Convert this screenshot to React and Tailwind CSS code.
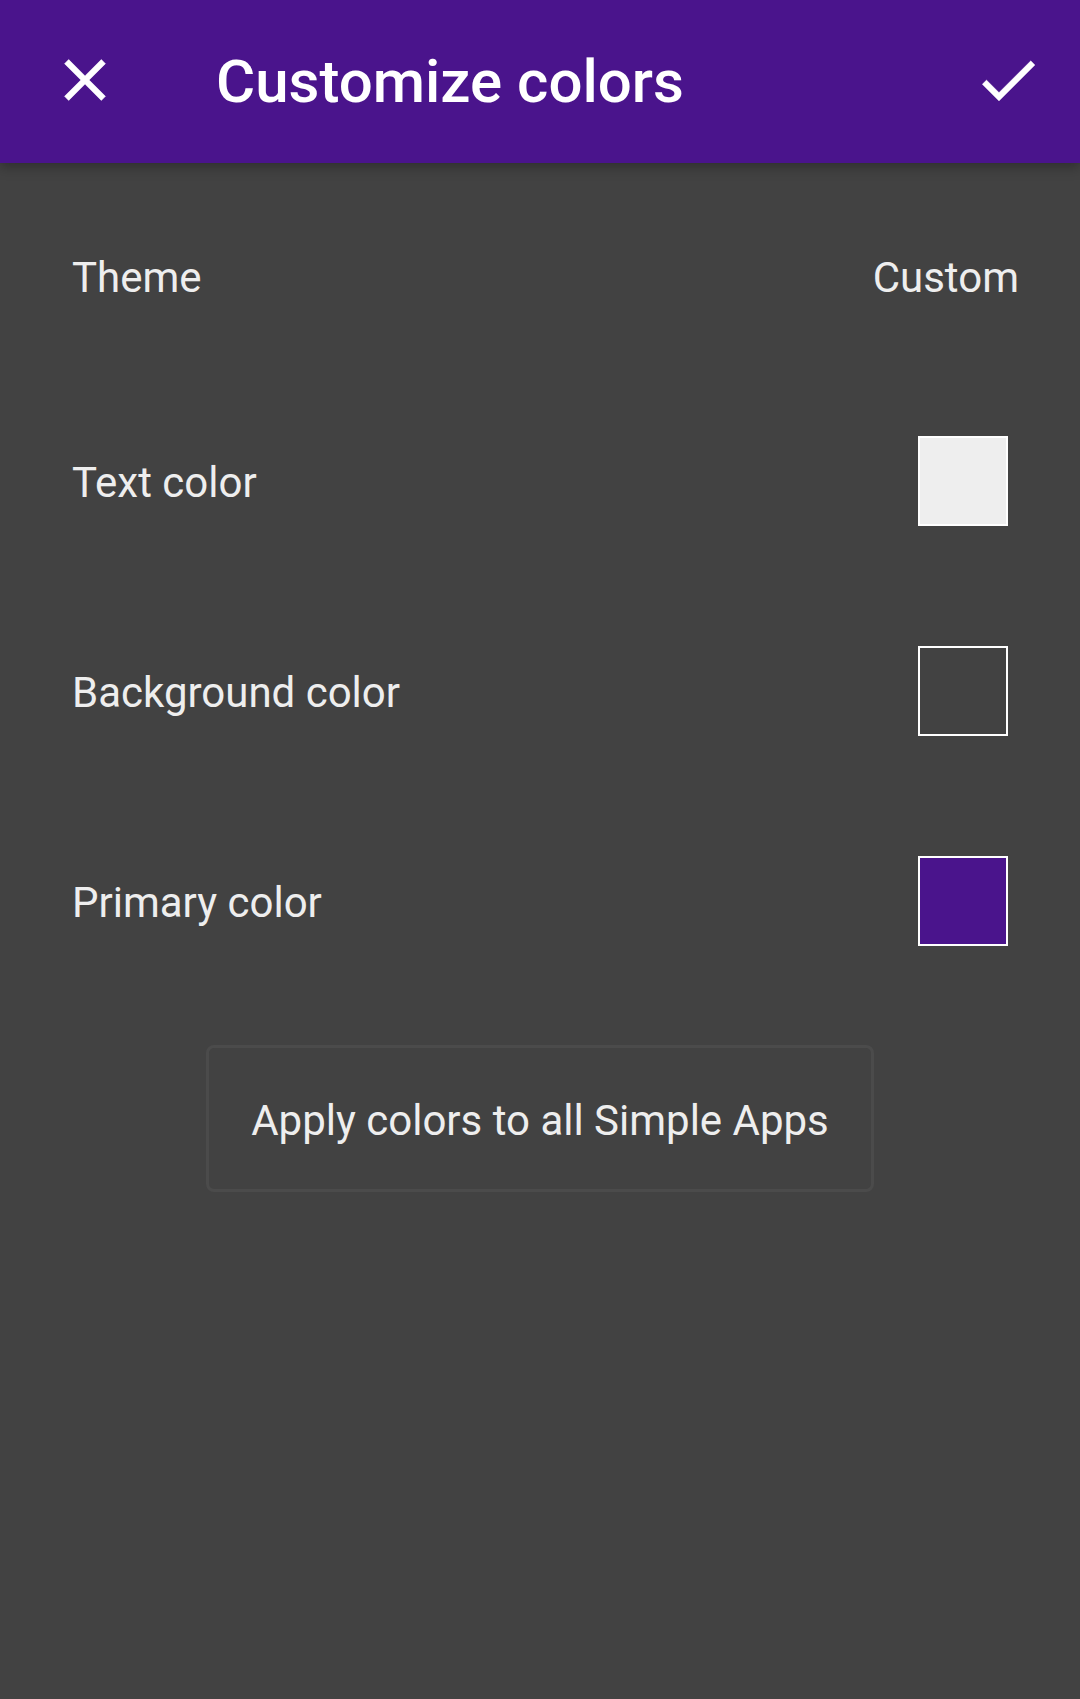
const colors = [
  { name: "Text color", swatch: "bg-[#eeeeee]" },
  { name: "Background color", swatch: "bg-[#424242]" },
  { name: "Primary color", swatch: "bg-[#4a148c]" },
];

function CloseIcon() {
  return (
    <svg viewBox="0 0 24 24" className="size-[70px] fill-current stroke-current stroke-[0.2]" aria-hidden="true">
      <path d="M19 6.41 17.59 5 12 10.59 6.41 5 5 6.41 10.59 12 5 17.59 6.41 19 12 13.41 17.59 19 19 17.59 13.41 12z" />
    </svg>
  );
}

function CheckIcon() {
  return (
    <svg viewBox="0 0 24 24" className="size-[72px] fill-current stroke-current stroke-[0.1]" aria-hidden="true">
      <path d="M9 16.17 4.83 12l-1.42 1.41L9 19 21 7l-1.41-1.41z" />
    </svg>
  );
}

function ColorRow({ name, swatch }) {
  return (
    <button type="button" className="flex h-[210px] w-full items-center justify-between px-[72px] text-left">
      <span className="pt-1">{name}</span>
      <span className={`size-[90px] border-2 border-white ${swatch}`} />
    </button>
  );
}

export default function App() {
  return (
    <div className="flex min-h-screen flex-col bg-[#424242] font-['Roboto',sans-serif] text-[42px] leading-[48px] text-[#eeeeee]">
      <header className="flex h-[163px] items-center bg-[#4a148c] pr-9 pl-[50px] text-white shadow-[0_4px_12px_rgba(0,0,0,0.3)]">
        <button type="button" aria-label="Close" className="pb-1">
          <CloseIcon />
        </button>
        <h1 className="flex-1 pl-24 text-[60px] leading-[72px] font-medium">Customize colors</h1>
        <button type="button" aria-label="Save" className="pb-1">
          <CheckIcon />
        </button>
      </header>
      <main className="flex flex-col pt-4">
        <button type="button" className="flex h-[197px] w-full items-center justify-between pr-[61px] pl-[72px] text-left">
          <span>Theme</span>
          <span>Custom</span>
        </button>
        {colors.map((color) => (
          <ColorRow key={color.name} {...color} />
        ))}
        <button type="button" className="mt-[39px] h-[147px] self-center rounded-lg border-3 border-[#4b4b4b] px-[42px] pt-1">
          Apply colors to all Simple Apps
        </button>
      </main>
    </div>
  );
}
